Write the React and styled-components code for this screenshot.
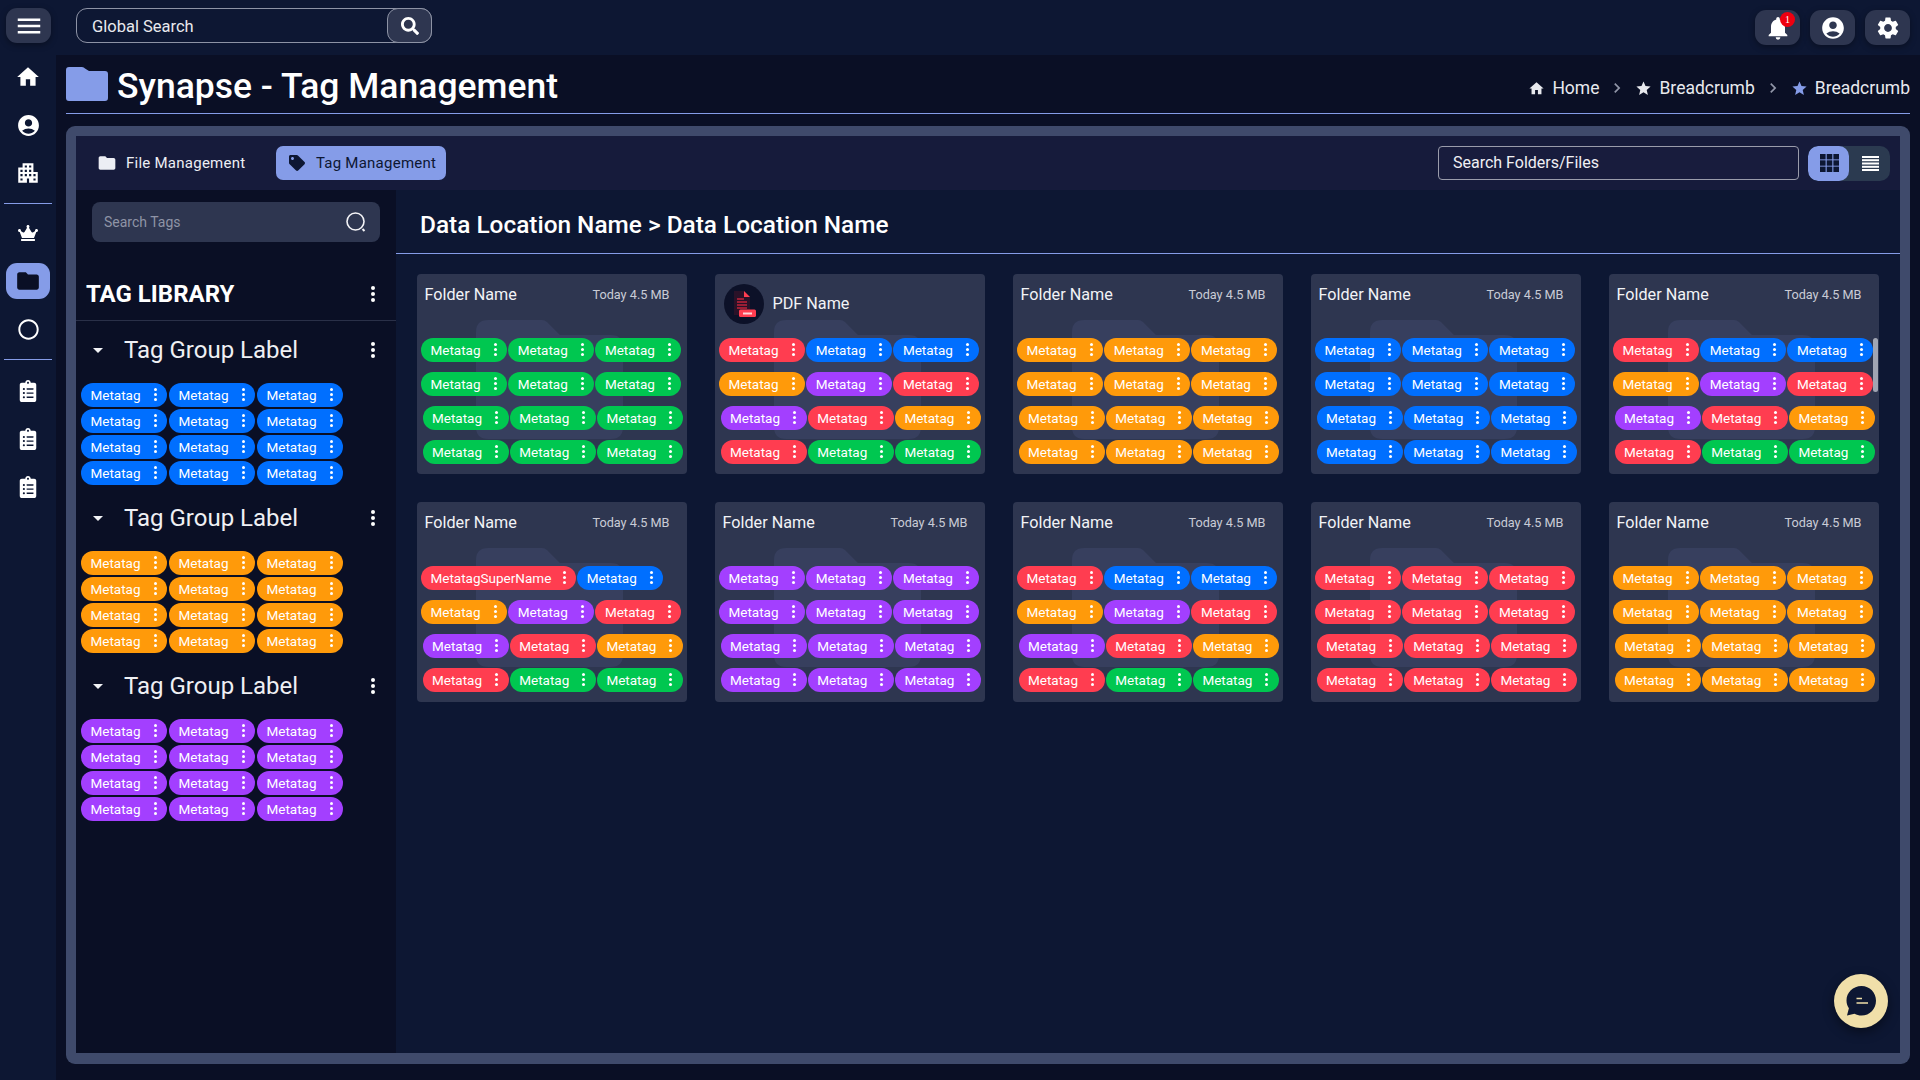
import React from "react";
import styled, { createGlobalStyle } from "styled-components";
import {
  MdMenu,
  MdHome,
  MdAccountCircle,
  MdApartment,
  MdFolder,
  MdNotifications,
  MdSettings,
  MdStar,
  MdChevronRight,
  MdArrowDropDown,
} from "react-icons/md";
import { FaCrown, FaRegCircle, FaClipboardList, FaSearch, FaTag } from "react-icons/fa";

const GlobalStyle = createGlobalStyle`
  html, body { margin: 0; padding: 0; background: #0a0f25; }
  body { font-family: Roboto, "Liberation Sans", sans-serif; color: #fff; }
  * { box-sizing: border-box; }
`;

const TAG_COLORS = {
  b: "#006fff",
  o: "#ff9a0a",
  p: "#a33fff",
  r: "#ff3d50",
  g: "#00c750",
};

const MIXED = ["rbb", "opr", "pro", "rgg"];
const same = (c) => [c + c + c, c + c + c, c + c + c, c + c + c];

const CARDS = [
  { rows: same("g") },
  { rows: MIXED, pdf: true },
  { rows: same("o") },
  { rows: same("b") },
  { rows: MIXED, scroll: true },
  { rows: MIXED, superTag: true },
  { rows: same("p") },
  { rows: MIXED },
  { rows: same("r") },
  { rows: same("o") },
];

const Page = styled.div`
  width: 1920px;
  height: 1080px;
  display: flex;
  flex-direction: column;
  overflow: hidden;
  background: #0a0f25;
`;

const TopBar = styled.header`
  height: 55px;
  flex: none;
  display: flex;
  align-items: flex-start;
  padding: 8px 10px 0 6px;
  background: #0d1733;
`;

const IconButton = styled.button`
  position: relative;
  width: 45px;
  height: 35px;
  margin-top: ${(p) => p.$top || 0}px;
  border: 0;
  padding: 0;
  border-radius: 11px;
  background: #2e3650;
  color: #fff;
  display: flex;
  align-items: center;
  justify-content: center;
  box-shadow: 0 2px 6px rgba(0, 0, 0, 0.35);
`;

const GlobalSearchBox = styled.div`
  width: 356px;
  height: 35px;
  margin-left: 25px;
  display: flex;
  align-items: center;
  justify-content: space-between;
  border: 1px solid #8d93a5;
  border-radius: 11px;
`;

const GlobalSearchText = styled.span`
  padding: 1px 0 0 15px;
  font-size: 16.5px;
  color: #e8e9ee;
`;

const GlobalSearchButton = styled.span`
  width: 45px;
  height: 35px;
  margin-right: -1px;
  border: 1px solid #8d93a5;
  border-radius: 11px;
  background: #2e3650;
  display: flex;
  align-items: center;
  justify-content: center;
`;

const TopActions = styled.div`
  margin-left: auto;
  display: flex;
  gap: 10px;
`;

const Badge = styled.span`
  position: absolute;
  top: 2px;
  right: 5px;
  width: 15px;
  height: 15px;
  border-radius: 50%;
  background: #ee0010;
  color: #fff;
  font-family: "Liberation Serif", serif;
  font-size: 10px;
  line-height: 15px;
  text-align: center;
`;

const Body = styled.div`
  flex: 1;
  min-height: 0;
  display: flex;
`;

const Sidebar = styled.nav`
  width: 56px;
  flex: none;
  display: flex;
  flex-direction: column;
  align-items: center;
  gap: 4px;
  background: #0d1733;
`;

const NavSlot = styled.div`
  height: 44px;
  display: flex;
  align-items: center;
  justify-content: center;
`;

const NavIcon = styled.div`
  width: 44px;
  height: 36px;
  display: flex;
  align-items: center;
  justify-content: center;
  border-radius: 11px;
  color: ${(p) => (p.$active ? "#0a0f25" : "#fff")};
  background: ${(p) => (p.$active ? "#859ce8" : "transparent")};
`;

const NavDivider = styled.div`
  width: 48px;
  height: 1px;
  margin: 3.5px 0 ${(p) => (p.$tail ? 5 : 3.5)}px;
  background: #859ce8;
`;

const Main = styled.main`
  flex: 1;
  min-width: 0;
  display: flex;
  flex-direction: column;
  padding: 0 10px 16px;
`;

const PageHeader = styled.div`
  height: 59px;
  flex: none;
  display: flex;
  align-items: center;
  border-bottom: 1px solid #859ce8;
`;

const PageTitle = styled.h1`
  margin: 5px 0 0 9px;
  font-size: 35.5px;
  font-weight: 500;
  line-height: 1;
`;

const Crumbs = styled.div`
  margin: 8px 0 0 auto;
  display: flex;
  align-items: center;
  font-size: 17.5px;
  color: #e8e9ee;
`;

const Crumb = styled.span`
  display: flex;
  align-items: center;
  gap: 7px;
`;

const CrumbArrow = styled.span`
  display: flex;
  margin: 0 8px;
  color: #9196a8;
`;

const Panel = styled.section`
  flex: 1;
  min-height: 0;
  margin-top: 12px;
  padding: 10px 10px 11px;
  border-radius: 9px;
  background: #3f4a6b;
  display: flex;
  flex-direction: column;
  position: relative;
`;

const Toolbar = styled.div`
  height: 54px;
  flex: none;
  display: flex;
  align-items: center;
  padding: 0 10px 0 8px;
  background: #161b3b;
`;

const TabButton = styled.div`
  height: 34px;
  display: flex;
  align-items: center;
  gap: ${(p) => (p.$active ? 10.5 : 9)}px;
  padding: 0 10px 0 13px;
  border-radius: 7px;
  font-size: 15px;
  letter-spacing: 0.25px;
  background: ${(p) => (p.$active ? "#859ce8" : "transparent")};
  color: ${(p) => (p.$active ? "#0d1733" : "#eceef4")};
  margin-right: ${(p) => (p.$active ? 0 : 21)}px;
`;

const FolderSearch = styled.div`
  width: 361px;
  height: 34px;
  margin-left: auto;
  padding: 0 0 2px 14px;
  display: flex;
  align-items: center;
  border: 1.5px solid #9a9cab;
  border-radius: 4px;
  background: #181c3d;
  font-size: 16px;
  color: #f0f0f4;
`;

const ViewToggle = styled.div`
  margin-left: 9px;
  width: 82px;
  height: 35px;
  display: flex;
  border-radius: 10px;
  overflow: hidden;
  background: #2b3a50;
`;

const ViewOption = styled.div`
  flex: 1;
  display: flex;
  align-items: center;
  justify-content: center;
  padding-left: 1px;
  border-radius: 10px;
  background: ${(p) => (p.$active ? "#859ce8" : "transparent")};
`;

const Columns = styled.div`
  flex: 1;
  min-height: 0;
  display: flex;
`;

const LibraryPane = styled.aside`
  width: 320px;
  flex: none;
  background: #0a0f25;
  padding-top: 12px;
`;

const TagSearch = styled.div`
  width: 288px;
  height: 40px;
  margin-left: 16px;
  padding: 0 13px 0 12px;
  display: flex;
  align-items: center;
  justify-content: space-between;
  border-radius: 8px;
  background: #2e3650;
  font-size: 14px;
  color: #8f94a6;
`;

const LibraryHead = styled.div`
  height: 56px;
  margin-top: 23px;
  padding: 2px 21px 0 10px;
  display: flex;
  align-items: center;
  justify-content: space-between;
  border-bottom: 1px solid #2a3048;
`;

const LibraryTitle = styled.h2`
  margin: 0;
  font-size: 24px;
  font-weight: 700;
`;

const GroupList = styled.div`
  padding-top: 7.5px;
`;

const Group = styled.div`
  margin-bottom: 12px;
`;

const GroupHead = styled.div`
  height: 42px;
  margin-bottom: 12px;
  display: flex;
  align-items: center;
  padding: 0 21px 0 10px;
`;

const GroupName = styled.span`
  margin-left: 14px;
  font-size: 24px;
  color: #eff0f4;
  flex: 1;
`;

const GroupTags = styled.div`
  display: grid;
  grid-template-columns: repeat(3, 86px);
  gap: 2px;
  padding-left: 5px;
`;

const Tag = styled.div`
  height: 24px;
  width: ${(p) => (p.$wide ? 155 : 86)}px;
  flex: none;
  padding: 0 10.5px 0 9.5px;
  display: flex;
  align-items: center;
  justify-content: space-between;
  border-radius: 12px;
  background: ${(p) => TAG_COLORS[p.$color]};
  color: #fff;
  font-size: 13.5px;
  position: relative;
  z-index: 1;
`;

const Dots = styled.span`
  display: flex;
  flex-direction: column;
  gap: 2px;
  & > i {
    display: block;
    width: ${(p) => p.$size || 3}px;
    height: ${(p) => p.$size || 3}px;
    border-radius: 50%;
    background: #fff;
  }
`;

const ContentPane = styled.div`
  flex: 1;
  min-width: 0;
  background: #0d1733;
  position: relative;
`;

const ContentHead = styled.div`
  height: 64px;
  padding: 5px 0 0 24px;
  display: flex;
  align-items: center;
  border-bottom: 1px solid #859ce8;
  font-size: 24.4px;
  font-weight: 500;
`;

const CardGrid = styled.div`
  display: grid;
  grid-template-columns: repeat(5, 270px);
  grid-auto-rows: 200px;
  gap: 28px;
  padding: 20px 0 0 20.5px;
`;

const Card = styled.article`
  position: relative;
  overflow: hidden;
  border-radius: 4px;
  background: #2e3650;
`;

const Watermark = styled.svg`
  position: absolute;
  left: 59px;
  top: 46px;
  width: 147px;
  height: 119px;
`;

const CardHead = styled.div`
  height: 63.5px;
  padding: 10px 17px 0 ${(p) => (p.$pdf ? 9 : 8)}px;
  display: flex;
  align-items: flex-start;
  justify-content: ${(p) => (p.$pdf ? "flex-start" : "space-between")};
  gap: ${(p) => (p.$pdf ? 9 : 0)}px;
  position: relative;
`;

const CardName = styled.span`
  font-size: 16.2px;
  line-height: ${(p) => (p.$pdf ? 39 : 21)}px;
  color: #f2f3f6;
`;

const CardMeta = styled.span`
  font-size: 12.7px;
  line-height: 21px;
  color: #c9ccd6;
`;

const PdfBadge = styled.div`
  width: 40px;
  height: 40px;
  flex: none;
  border-radius: 50%;
  background: #0c1128;
  display: flex;
  align-items: center;
  justify-content: center;
`;

const TagRows = styled.div`
  display: flex;
  flex-direction: column;
  gap: 10px;
`;

const TagRow = styled.div`
  display: flex;
  gap: 1.2px;
  padding-left: ${(p) => p.$indent}px;
`;

const ScrollThumb = styled.div`
  position: absolute;
  right: 1px;
  top: 64px;
  width: 5px;
  height: 54px;
  border-radius: 3px;
  background: rgba(190, 194, 204, 0.8);
  z-index: 2;
`;

const ChatButton = styled.div`
  position: absolute;
  right: 22px;
  bottom: 36px;
  width: 54px;
  height: 54px;
  border-radius: 50%;
  background: #f0dfa9;
  display: flex;
  align-items: center;
  justify-content: center;
  box-shadow: 0 4px 12px rgba(0, 0, 0, 0.45);
  z-index: 3;
`;

const Kebab = ({ size }) => (
  <Dots $size={size}>
    <i />
    <i />
    <i />
  </Dots>
);

const MetaTag = ({ color, wide }) => (
  <Tag $color={color} $wide={wide}>
    <span>{wide ? "MetatagSuperName" : "Metatag"}</span>
    <Kebab />
  </Tag>
);

const PdfIcon = () => (
  <svg width="26" height="28" viewBox="0 0 26 28">
    <path d="M3 1h10l6 6v18H3z" fill="#2a1228" />
    <path d="M13 1l6 6h-6z" fill="#ff3d50" />
    <path d="M6 9h7M6 12h10M6 15h10M6 18h10" stroke="#c2233a" strokeWidth="1.6" />
    <rect x="8" y="19.5" width="17" height="7.5" rx="1.5" fill="#ff3d50" />
    <rect x="12" y="22.5" width="9" height="2" fill="#ffd6da" />
  </svg>
);

const GridIcon = () => (
  <svg width="19" height="18" viewBox="0 0 19 18" fill="#0d1733">
    <rect x="0" y="0" width="5.6" height="5.4" />
    <rect x="6.7" y="0" width="5.6" height="5.4" />
    <rect x="13.4" y="0" width="5.6" height="5.4" />
    <rect x="0" y="6.3" width="5.6" height="5.4" />
    <rect x="6.7" y="6.3" width="5.6" height="5.4" />
    <rect x="13.4" y="6.3" width="5.6" height="5.4" />
    <rect x="0" y="12.6" width="5.6" height="5.4" />
    <rect x="6.7" y="12.6" width="5.6" height="5.4" />
    <rect x="13.4" y="12.6" width="5.6" height="5.4" />
  </svg>
);

const ListIcon = () => (
  <svg width="17" height="15" viewBox="0 0 17 15" fill="#fff">
    <rect y="0" width="17" height="2" />
    <rect y="3.2" width="17" height="2" />
    <rect y="6.5" width="17" height="2" />
    <rect y="9.8" width="17" height="2" />
    <rect y="13" width="17" height="2" />
  </svg>
);

const ThinSearch = () => (
  <svg width="22" height="22" viewBox="0 0 22 22" fill="none" stroke="#f4f4f7" strokeWidth="1.6">
    <circle cx="10.5" cy="10.5" r="8.5" />
    <path d="M17.5 18l2 2" strokeWidth="2" />
  </svg>
);

const ChatIcon = () => (
  <svg width="32" height="32" viewBox="0 0 32 32">
    <path
      d="M16.5 1C8 1 1.5 7.5 1.5 15.5c0 3 .9 5.6 2.4 7.8L2 30.5l7.5-1.8c2.1 1.2 4.5 1.8 7 1.8C24.8 30.5 31 24 31 15.7 31 7.5 24.8 1 16.5 1z"
      fill="#0d1733"
    />
    <path d="M11.5 13.5h5.5M11.5 18h11.5" stroke="#f0dfa9" strokeWidth="1.5" />
  </svg>
);

function FolderCard({ card }) {
  return (
    <Card>
      <Watermark viewBox="0 0 147 119">
        <path
          d="M12 0h54q3 0 5 2l13 13h51q12 0 12 12v80q0 12-12 12H12q-12 0-12-12V12Q0 0 12 0z"
          fill="#373f5e"
        />
      </Watermark>
      {card.pdf ? (
        <CardHead $pdf>
          <PdfBadge>
            <PdfIcon />
          </PdfBadge>
          <CardName $pdf>PDF Name</CardName>
        </CardHead>
      ) : (
        <CardHead>
          <CardName>Folder Name</CardName>
          <CardMeta>Today 4.5 MB</CardMeta>
        </CardHead>
      )}
      <TagRows>
        {card.rows.map((row, i) => {
          const indent = i < 2 ? 4.5 : 6;
          if (card.superTag && i === 0) {
            return (
              <TagRow key={i} $indent={indent}>
                <MetaTag color="r" wide />
                <MetaTag color="b" />
              </TagRow>
            );
          }
          return (
            <TagRow key={i} $indent={indent}>
              {row.split("").map((c, j) => (
                <MetaTag key={j} color={c} />
              ))}
            </TagRow>
          );
        })}
      </TagRows>
      {card.scroll && <ScrollThumb />}
    </Card>
  );
}

function TagGroup({ color }) {
  return (
    <Group>
      <GroupHead>
        <MdArrowDropDown size={24} color="#f2f3f6" />
        <GroupName>Tag Group Label</GroupName>
        <Kebab size={4} />
      </GroupHead>
      <GroupTags>
        {Array.from({ length: 12 }).map((_, i) => (
          <MetaTag key={i} color={color} />
        ))}
      </GroupTags>
    </Group>
  );
}

export default function App() {
  return (
    <Page>
      <GlobalStyle />
      <TopBar>
        <IconButton>
          <MdMenu size={30} />
        </IconButton>
        <GlobalSearchBox>
          <GlobalSearchText>Global Search</GlobalSearchText>
          <GlobalSearchButton>
            <FaSearch size={18} color="#fff" />
          </GlobalSearchButton>
        </GlobalSearchBox>
        <TopActions>
          <IconButton $top={2}>
            <MdNotifications size={28} />
            <Badge>1</Badge>
          </IconButton>
          <IconButton $top={2}>
            <MdAccountCircle size={26} />
          </IconButton>
          <IconButton $top={2}>
            <MdSettings size={26} />
          </IconButton>
        </TopActions>
      </TopBar>
      <Body>
        <Sidebar>
          <NavSlot><NavIcon><MdHome size={26} /></NavIcon></NavSlot>
          <NavSlot><NavIcon><MdAccountCircle size={25} /></NavIcon></NavSlot>
          <NavSlot><NavIcon><MdApartment size={26} /></NavIcon></NavSlot>
          <NavDivider />
          <NavSlot><NavIcon><FaCrown size={20} /></NavIcon></NavSlot>
          <NavSlot><NavIcon $active><MdFolder size={26} /></NavIcon></NavSlot>
          <NavSlot><NavIcon><FaRegCircle size={21} /></NavIcon></NavSlot>
          <NavDivider $tail />
          <NavSlot><NavIcon><FaClipboardList size={22} /></NavIcon></NavSlot>
          <NavSlot><NavIcon><FaClipboardList size={22} /></NavIcon></NavSlot>
          <NavSlot><NavIcon><FaClipboardList size={22} /></NavIcon></NavSlot>
        </Sidebar>
        <Main>
          <PageHeader>
            <svg width="42" height="34" viewBox="0 0 42 34">
              <path
                d="M3 0h13q2 0 3 1.5L23 4h16q3 0 3 3v24q0 3-3 3H3q-3 0-3-3V3q0-3 3-3z"
                fill="#859ce8"
              />
            </svg>
            <PageTitle>Synapse - Tag Management</PageTitle>
            <Crumbs>
              <Crumb><MdHome size={17} />Home</Crumb>
              <CrumbArrow><MdChevronRight size={20} /></CrumbArrow>
              <Crumb><MdStar size={17} />Breadcrumb</Crumb>
              <CrumbArrow><MdChevronRight size={20} /></CrumbArrow>
              <Crumb><MdStar size={17} color="#859ce8" />Breadcrumb</Crumb>
            </Crumbs>
          </PageHeader>
          <Panel>
            <Toolbar>
              <TabButton>
                <MdFolder size={20} color="#eceef4" />
                File Management
              </TabButton>
              <TabButton $active>
                <FaTag size={16} color="#0d1733" />
                Tag Management
              </TabButton>
              <FolderSearch>Search Folders/Files</FolderSearch>
              <ViewToggle>
                <ViewOption $active><GridIcon /></ViewOption>
                <ViewOption><ListIcon /></ViewOption>
              </ViewToggle>
            </Toolbar>
            <Columns>
              <LibraryPane>
                <TagSearch>
                  Search Tags
                  <ThinSearch />
                </TagSearch>
                <LibraryHead>
                  <LibraryTitle>TAG LIBRARY</LibraryTitle>
                  <Kebab size={4} />
                </LibraryHead>
                <GroupList>
                  <TagGroup color="b" />
                  <TagGroup color="o" />
                  <TagGroup color="p" />
                </GroupList>
              </LibraryPane>
              <ContentPane>
                <ContentHead>Data Location Name &gt; Data Location Name</ContentHead>
                <CardGrid>
                  {CARDS.map((card, i) => (
                    <FolderCard key={i} card={card} />
                  ))}
                </CardGrid>
              </ContentPane>
            </Columns>
            <ChatButton>
              <ChatIcon />
            </ChatButton>
          </Panel>
        </Main>
      </Body>
    </Page>
  );
}
